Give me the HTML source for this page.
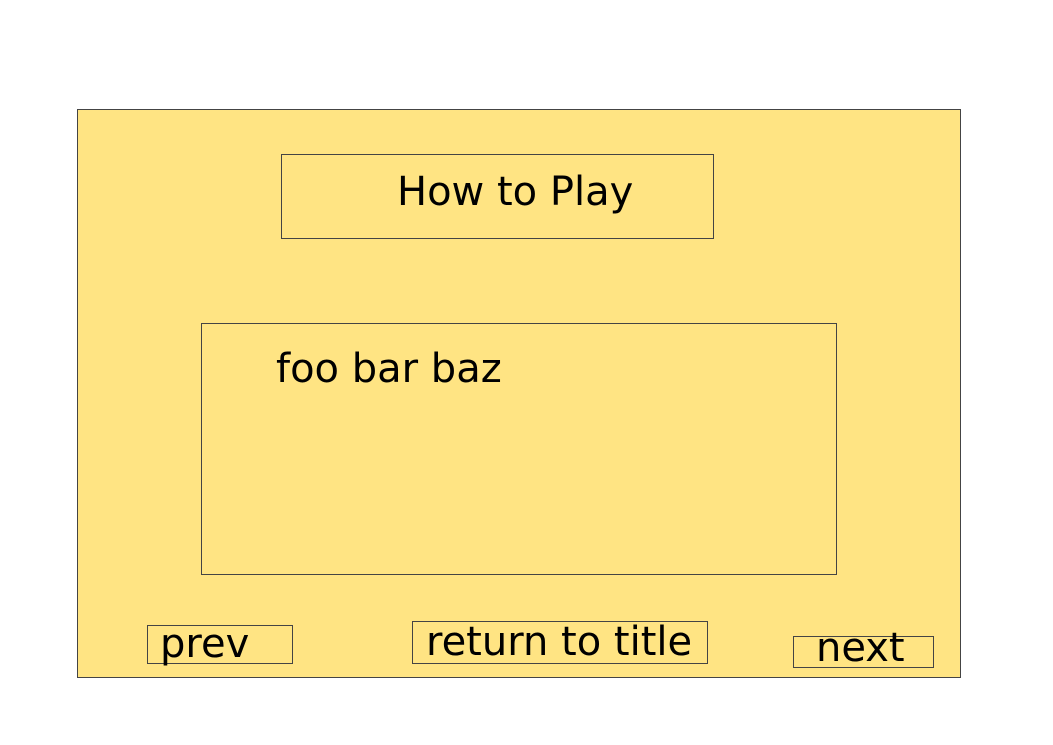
<!DOCTYPE html>
<html><head><style>html,body{margin:0;padding:0;background:#fff;}svg{display:block}</style></head>
<body>
<svg width="1053" height="745" xmlns="http://www.w3.org/2000/svg" font-family="DejaVu Sans, sans-serif" font-size="40">
<rect x="77.5" y="109.5" width="883" height="568" fill="#ffe483" stroke="#444" stroke-width="1"/>
<rect x="281.5" y="154.5" width="432" height="84" fill="none" stroke="#444"/>
<rect x="201.5" y="323.5" width="635" height="251" fill="none" stroke="#444"/>
<rect x="147.5" y="625.5" width="145" height="38" fill="none" stroke="#444"/>
<rect x="412.5" y="621.5" width="295" height="42" fill="none" stroke="#444"/>
<rect x="793.5" y="636.5" width="140" height="31" fill="none" stroke="#444"/>
<text x="397" y="205">How to Play</text>
<text x="276" y="382">foo bar baz</text>
<text x="160" y="657">prev</text>
<text x="426" y="655">return to title</text>
<text x="816" y="661">next</text>
</svg>
</body></html>
